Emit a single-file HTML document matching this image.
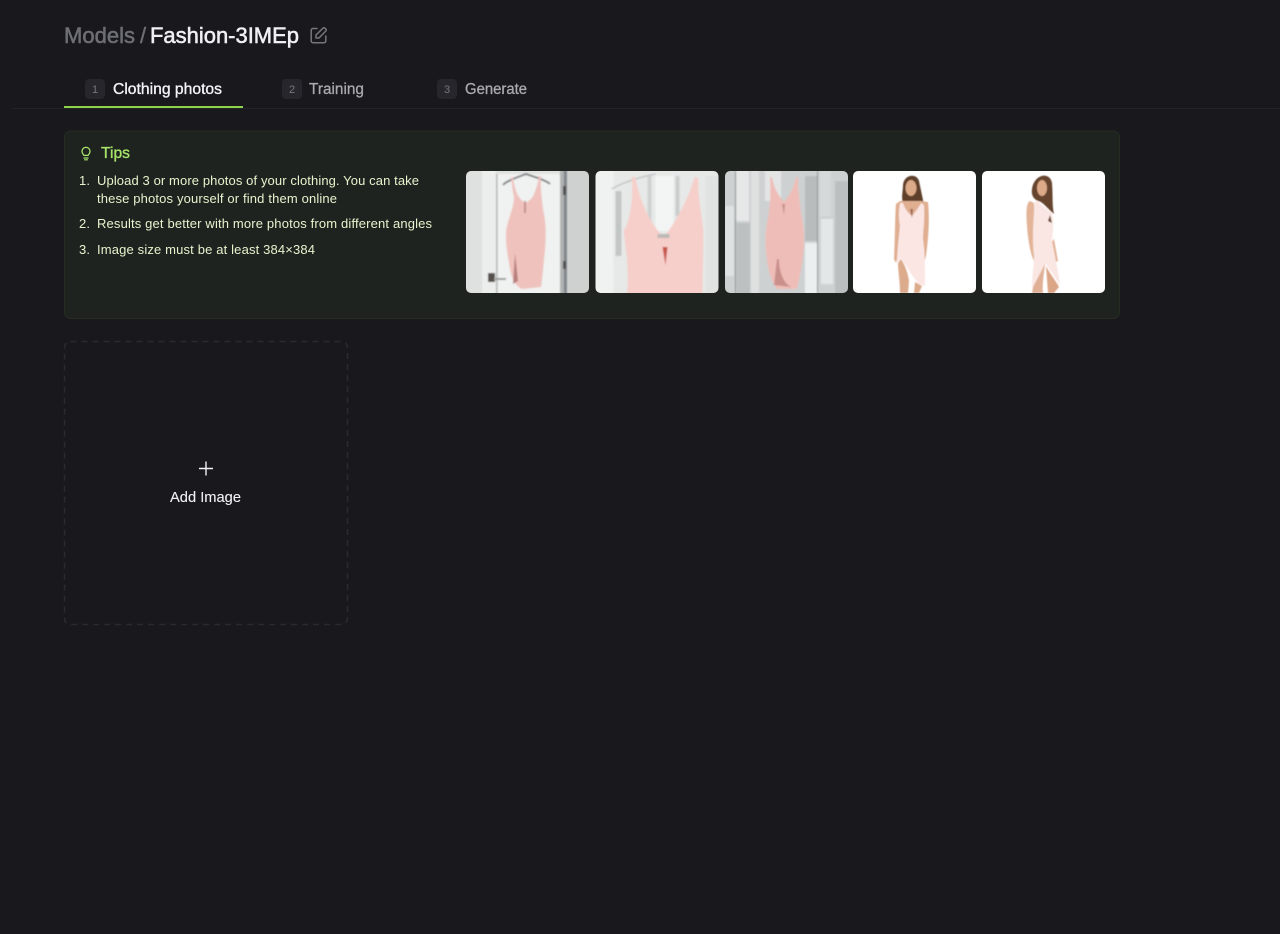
<!DOCTYPE html>
<html lang="en">
<head>
<meta charset="utf-8">
<title>Fashion-3IMEp</title>
<style>
html,body{margin:0;padding:0;background:#18181d;width:1280px;height:934px;overflow:hidden}
svg{display:block;position:absolute;left:0;top:0}
text{font-family:"Liberation Sans",sans-serif}
</style>
</head>
<body>
<svg width="1280" height="934" viewBox="0 0 1280 934" xmlns="http://www.w3.org/2000/svg">
<defs>
<filter id="b" x="-5%" y="-5%" width="110%" height="110%"><feGaussianBlur stdDeviation="0.9"/></filter>
<filter id="s" x="-5%" y="-5%" width="110%" height="110%"><feGaussianBlur stdDeviation="0.5"/></filter>
<clipPath id="c"><rect x="0" y="0" width="123" height="122" rx="5"/></clipPath>
</defs>
<rect width="1280" height="934" fill="#18181d"/>

<!-- Header -->
<text x="64" y="43" font-size="22.5" fill="#6e6e75" stroke="#6e6e75" stroke-width=".55" textLength="71" lengthAdjust="spacingAndGlyphs">Models</text>
<text x="140" y="43" font-size="22" fill="#6e6e75" stroke="#6e6e75" stroke-width=".4" textLength="6">/</text>
<text x="150" y="43" font-size="22.5" fill="#f0f0f3" stroke="#f0f0f3" stroke-width=".55" textLength="149" lengthAdjust="spacingAndGlyphs">Fashion-3IMEp</text>
<g fill="none" stroke="#76767c" stroke-width="1.5" stroke-linecap="round" stroke-linejoin="round">
<path d="M317 28.5H313a1.8 1.8 0 0 0-1.8 1.8V41a1.8 1.8 0 0 0 1.8 1.8H324a1.8 1.8 0 0 0 1.8-1.8V36"/>
<path d="M316 38V35L323 28.2a1.3 1.3 0 0 1 1.9 0L325.8 29a1.3 1.3 0 0 1 0 2L319 38Z"/>
</g>

<!-- Tabs -->
<rect x="12" y="108" width="1268" height="1" fill="#232429"/>
<rect x="64" y="106" width="179" height="2" fill="#8fd24c"/>
<rect x="85" y="79" width="20" height="20" rx="4" fill="#26262c"/>
<text x="95" y="93" font-size="11" fill="#77777e" text-anchor="middle">1</text>
<text x="113" y="94" font-size="15.5" fill="#f4f4f6" stroke="#f4f4f6" stroke-width=".35" textLength="109" lengthAdjust="spacingAndGlyphs">Clothing photos</text>
<rect x="282" y="79" width="20" height="20" rx="4" fill="#26262c"/>
<text x="292" y="93" font-size="11" fill="#77777e" text-anchor="middle">2</text>
<text x="309" y="94" font-size="15.5" fill="#a9a9af" stroke="#a9a9af" stroke-width=".3" textLength="55" lengthAdjust="spacingAndGlyphs">Training</text>
<rect x="437" y="79" width="20" height="20" rx="4" fill="#26262c"/>
<text x="447" y="93" font-size="11" fill="#77777e" text-anchor="middle">3</text>
<text x="465" y="94" font-size="15.5" fill="#a9a9af" stroke="#a9a9af" stroke-width=".3" textLength="62" lengthAdjust="spacingAndGlyphs">Generate</text>

<!-- Tips -->
<rect x="64.5" y="131" width="1055" height="187.5" rx="6" fill="#1e231f" stroke="#262c22"/>
<g fill="none" stroke="#a8e56a" stroke-width="1.2" stroke-linecap="round" stroke-linejoin="round">
<path d="M83.8 155.4c-.2-1-.9-1.5-1.4-2.3a4 4 0 1 1 7.2 0c-.5.8-1.2 1.3-1.4 2.3Z"/>
<path d="M84 158h4M84.6 159.8h2.8"/>
</g>
<text x="101" y="158" font-size="15.5" fill="#a8e56a" stroke="#a8e56a" stroke-width=".35" textLength="29" lengthAdjust="spacingAndGlyphs">Tips</text>
<g font-size="13" fill="#e6f3cd">
<text x="79" y="185" textLength="11">1.</text>
<text x="97" y="185" textLength="322">Upload 3 or more photos of your clothing. You can take</text>
<text x="97" y="203" textLength="240">these photos yourself or find them online</text>
<text x="79" y="228" textLength="11">2.</text>
<text x="97" y="228" textLength="335">Results get better with more photos from different angles</text>
<text x="79" y="254" textLength="11">3.</text>
<text x="97" y="254" textLength="218">Image size must be at least 384×384</text>
</g>

<!-- Photo 1 -->
<g transform="translate(466 171)"><g clip-path="url(#c)"><g filter="url(#b)">
<rect x="-4" y="-4" width="131" height="130" fill="#dfe1e0"/>
<rect x="16" y="-4" width="14" height="130" fill="#eceeed"/>
<rect x="30" y="3" width="1.5" height="121" fill="#b4b6b5"/>
<rect x="32" y="3" width="62" height="121" fill="#f0f2f1"/>
<rect x="94" y="-4" width="4" height="130" fill="#b0b3b2"/>
<rect x="98" y="-4" width="3" height="130" fill="#80858a"/>
<rect x="101" y="-4" width="26" height="130" fill="#cfd1d0"/>
<rect x="97" y="15" width="3" height="9" fill="#4d4f4d"/>
<rect x="97" y="90" width="3" height="8" fill="#4d4f4d"/>
<rect x="22" y="102" width="7" height="9" fill="#54504c"/>
<rect x="28" y="107" width="12" height="2" fill="#9a9c9b"/>
<path d="M37 14 C40 10 52 6 60 3 C68 6 80 9 84 13" fill="none" stroke="#77797a" stroke-width="1.8"/>
<path d="M45 6 L47 6 C48 14 50 22 53 26 L59 33 L66 27 C70 20 72 12 73 5 L75 5 C74 15 76 28 77 38 C81 55 80 72 78 88 C77 100 76 110 75 116 L56 118 C48 114 45 106 43 92 C40 75 39 65 41 55 C45 40 50 30 47 22 Z" fill="#efc2bd"/>
<path d="M49 82 L47 113 L52 110 Z" fill="#b97f7c"/>
<path d="M58 30 L60 30 L60 42 L58 42 Z" fill="#c48f8b"/>
</g></g></g>

<!-- Photo 2 -->
<g transform="translate(595.5 171)"><g clip-path="url(#c)"><g filter="url(#b)">
<rect x="-4" y="-4" width="131" height="130" fill="#e6e9e8"/>
<rect x="-4" y="-4" width="22" height="130" fill="#f0f2f1"/>
<rect x="20" y="20" width="6" height="65" fill="#c2c7c6"/>
<rect x="60" y="5" width="18" height="55" fill="#f3f5f5"/>
<rect x="52" y="5" width="4" height="50" fill="#ced2d1"/>
<rect x="80" y="5" width="4" height="40" fill="#c9cdcc"/>
<rect x="110" y="5" width="15" height="120" fill="#e0e3e2"/>
<path d="M16 18 C30 10 45 6 60 3" fill="none" stroke="#c2c6c5" stroke-width="1.5"/>
<path d="M36 6 L40 6 C44 30 54 50 66 64 L70 64 C82 48 94 25 99 6 L103 7 C102 25 106 40 108 60 L107 126 L31 126 C34 105 31 80 28 60 C35 50 38 25 36 6 Z" fill="#f6cfca"/>
<path d="M62 63 H74 V67 H62 Z" fill="#bdb8b6"/>
<path d="M67 76 L72 76 L70 94 Z" fill="#c6544a"/>
</g></g></g>

<!-- Photo 3 -->
<g transform="translate(725 171)"><g clip-path="url(#c)"><g filter="url(#b)">
<rect x="-4" y="-4" width="131" height="130" fill="#cdd1d1"/>
<rect x="11" y="-4" width="13" height="54" fill="#e6e8e8"/>
<rect x="26" y="-4" width="8" height="130" fill="#dfe1e1"/>
<rect x="0" y="35" width="9" height="70" fill="#dfe2e2"/>
<rect x="12" y="52" width="13" height="72" fill="#bcc0c0"/>
<rect x="40" y="0" width="16" height="30" fill="#e3e5e5"/>
<rect x="80" y="72" width="12" height="52" fill="#ecefef"/>
<rect x="80" y="5" width="12" height="65" fill="#b8bcbc"/>
<rect x="95" y="0" width="11" height="45" fill="#d6d9d9"/>
<rect x="96" y="48" width="12" height="65" fill="#e4e7e7"/>
<rect x="110" y="10" width="15" height="116" fill="#bbbfbf"/>
<rect x="10" y="0" width="1" height="122" fill="#7b7f7f"/>
<rect x="92" y="0" width="1" height="122" fill="#8b8f8f"/>
<path d="M45 6 L47 6 C49 18 54 25 59 31 C64 25 69 17 71 6 L73 6 C73 20 75 32 76 42 C79 55 79 65 79 72 C78 90 75 105 72 118 L52 118 C46 110 43 100 42 88 C40 75 40 65 42 52 C45 40 46 20 45 6 Z" fill="#efbdb7"/>
<path d="M52 88 L49 114 L66 116 C58 112 54 100 54 88 Z" fill="#c98f8a"/>
<path d="M57 33 L60 33 L59 44 Z" fill="#c48f8b"/>
</g></g></g>

<!-- Photo 4 -->
<g transform="translate(853 171)"><g clip-path="url(#c)"><rect width="123" height="122" fill="#fff"/><g filter="url(#s)">
<path d="M50 14 C51 3 64 2 66 10 C68 20 71 32 72 41 L66 36 L50 32 C48 26 50 20 50 14 Z" fill="#5f3f2c"/>
<ellipse cx="58" cy="17" rx="5.5" ry="8" fill="#dcaa88"/>
<path d="M47 30 L68 30 L75 31 C77 50 75 70 73 85 L71 92 L68 90 L69 55 L52 60 L47 55 L45 85 L43 92 L41 88 C42 70 42 45 43 33 Z" fill="#e0ae90"/>
<path d="M47 32 L50 32 C52 38 55 42 59 45 C63 40 66 36 68 32 L71 34 C72 50 70 60 70 68 C72 80 72 95 72 115 L66 113 C59 105 53 95 48 87 L44 92 C44 80 46 65 47 55 C45 45 46 38 47 32 Z" fill="#fbe6e4"/>
<path d="M45 92 L48 88 C53 96 55 103 56 110 L55 122 L47 122 C47 110 45 100 45 92 Z" fill="#dcab8c"/>
<path d="M62 111 L69 115 L66 122 L61 122 Z" fill="#dcab8c"/>
<path d="M57 38 L60 38 L59 47 Z" fill="#9c6c58"/>
</g></g></g>

<!-- Photo 5 -->
<g transform="translate(982 171)"><g clip-path="url(#c)"><rect width="123" height="122" fill="#fff"/><g filter="url(#s)">
<path d="M50 18 C52 3 68 0 70 12 C71 25 70 35 72 43 C66 38 60 30 56 30 C52 28 49 25 50 18 Z" fill="#66452f"/>
<ellipse cx="60" cy="17" rx="5" ry="8" fill="#dcaa88"/>
<path d="M48 30 C44 32 44 42 45 55 C46 70 49 85 52 90 L56 88 C53 78 51 65 53 55 L52 32 Z" fill="#e3b498"/>
<path d="M72 68 L76 90 L72 92 L69 72 Z" fill="#e3b498"/>
<path d="M53 30 L56 30 C60 35 65 38 70 42 C72 50 71 60 70 70 C73 85 76 100 78 114 L64 93 C59 100 54 110 51 116 L50 115 C50 105 52 95 52 85 C50 70 51 50 53 30 Z" fill="#fae6e2"/>
<path d="M51 116 L63 93 C62 103 60 113 61 122 L50 122 Z" fill="#dfb096"/>
<path d="M64 95 C68 103 74 110 77 116 L72 122 L66 122 Z" fill="#dba686"/>
<path d="M68 44 L70 52 L66 50 Z" fill="#6b4a3a"/>
</g></g></g>

<!-- Add image -->
<rect x="64.5" y="341.5" width="283" height="283" rx="6" fill="none" stroke="#2a2b30" stroke-width="1.5" stroke-dasharray="6 5"/>
<path d="M206 461.5V475.5M199 468.5H213" stroke="#f2f2f4" stroke-width="1.4" fill="none"/>
<text x="170" y="502" font-size="14.5" fill="#f2f2f4" stroke="#f2f2f4" stroke-width=".1" textLength="71" lengthAdjust="spacingAndGlyphs">Add Image</text>
</svg>
</body>
</html>
